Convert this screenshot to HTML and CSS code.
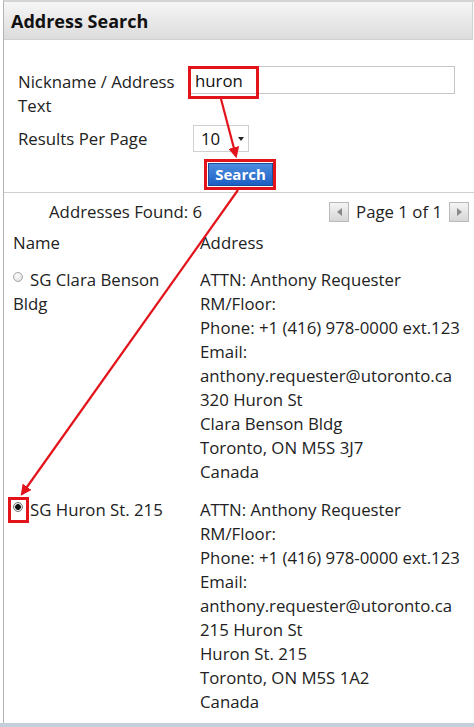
FILE: index.html
```html
<!DOCTYPE html>
<html lang="en">
<head>
<meta charset="utf-8">
<title>Address Search</title>
<link rel="stylesheet" href="styles.css">
</head>
<body>
<div class="window">
  <div class="header">Address Search</div>

  <div class="form">
    <div class="field">
      <label class="label" for="q">Nickname / Address Text</label>
      <input id="q" class="text-input" type="text" value="huron">
    </div>
    <div class="field field-short">
      <label class="label" for="pp">Results Per Page</label>
      <div class="select" id="pp"><span>10</span><span class="caret"></span></div>
    </div>
    <div class="actions">
      <button class="search-btn" type="button">Search</button>
    </div>
  </div>

  <div class="results">
    <div class="summary">
      <span class="found">Addresses Found: 6</span>
      <div class="pager">
        <span class="pg-btn"><span class="tri tri-left"></span></span>
        <span class="pg-text">Page 1 of 1</span>
        <span class="pg-btn"><span class="tri tri-right"></span></span>
      </div>
    </div>

    <div class="grid">
      <div class="col-head">Name</div>
      <div class="col-head">Address</div>

      <div class="name"><span class="radio"></span>SG Clara Benson Bldg</div>
      <div class="addr">ATTN: Anthony Requester<br>RM/Floor:<br>Phone: +1 (416) 978-0000 ext.123<br>Email:<br>anthony.requester@utoronto.ca<br>320 Huron St<br>Clara Benson Bldg<br>Toronto, ON M5S 3J7<br>Canada</div>

      <div class="name"><span class="radio checked"></span>SG Huron St. 215</div>
      <div class="addr">ATTN: Anthony Requester<br>RM/Floor:<br>Phone: +1 (416) 978-0000 ext.123<br>Email:<br>anthony.requester@utoronto.ca<br>215 Huron St<br>Huron St. 215<br>Toronto, ON M5S 1A2<br>Canada</div>
    </div>
  </div>
</div>
<div class="statusbar"></div>

<!-- callout boxes and arrows drawn over the form -->
<svg class="callouts" width="474" height="727" viewBox="0 0 474 727">
  <defs>
    <marker id="head" viewBox="0 0 10 10" refX="8" refY="5" markerWidth="5" markerHeight="5" orient="auto">
      <path d="M0 0 L10 5 L0 10 Z" fill="#e3131b"/>
    </marker>
  </defs>
  <g fill="none" stroke="#e3131b" stroke-width="3">
    <rect x="189.5" y="67.5" width="68" height="30"/>
    <rect x="205.5" y="160.5" width="69" height="28"/>
    <rect x="9.5" y="498.5" width="18" height="23"/>
  </g>
  <g stroke="#e3131b" stroke-width="2.2" fill="none">
    <line x1="221" y1="99" x2="236" y2="156" marker-end="url(#head)"/>
    <line x1="238" y1="190" x2="22" y2="494" marker-end="url(#head)"/>
  </g>
</svg>
</body>
</html>
```
FILE: styles.css
```css
html, body {
  margin: 0;
  padding: 0;
  background: #fff;
}

body {
  font-family: "Open Sans", "Noto Sans", sans-serif;
  font-size: 16.8px;
  line-height: 24px;
  color: #222;
  width: 474px;
  height: 727px;
  overflow: hidden;
  position: relative;
}

.window {
  margin-left: 3px;
  border-top: 2px solid #d4d4d4;
  border-left: 1px solid #b4b4b4;
  height: 721px;
}

.header {
  height: 37px;
  border-bottom: 1px solid #d0d0d0;
  border-right: 1px solid #d0d0d0;
  margin-right: 1px;
  background: linear-gradient(#f6f6f6, #dcdcdc);
  font-weight: 700;
  font-size: 18px;
  line-height: 38px;
  padding-left: 7px;
  color: #111;
}

.form {
  padding: 26px 0 0 14px;
  border-bottom: 1px solid #cfcfcf;
  height: 126px;
}

.field {
  display: flex;
  align-items: flex-start;
}

.label {
  width: 171px;
  flex: none;
  padding-top: 4px;
}

.text-input {
  width: 266px;
  height: 28px;
  box-sizing: border-box;
  margin: 0;
  border: 1px solid #c6c6c6;
  padding: 0 5px;
  font: inherit;
  color: #111;
  background: #fff;
}

.field-short {
  margin-top: 7px;
  align-items: center;
}

.field-short .label {
  width: 175px;
  padding-top: 0;
}

.select {
  width: 56px;
  height: 27px;
  box-sizing: border-box;
  border: 1px solid #d0d0d0;
  display: flex;
  align-items: center;
  justify-content: space-between;
  padding: 0 4px 0 7px;
  color: #111;
}

.caret {
  width: 0;
  height: 0;
  border-left: 3px solid transparent;
  border-right: 3px solid transparent;
  border-top: 4px solid #222;
}

.actions {
  padding: 10px 0 0 190px;
}

.search-btn {
  width: 65px;
  height: 23px;
  border: 1px solid #1b4f9a;
  background: linear-gradient(#4d8de0, #1c5fc4);
  color: #fff;
  font-family: "Open Sans", "Noto Sans", sans-serif;
  font-weight: 700;
  font-size: 15px;
  line-height: 19px;
  padding: 0;
}

.results {
  padding: 0 0 0 9px;
}

.summary {
  display: flex;
  align-items: center;
  justify-content: space-between;
  height: 34px;
  padding-top: 2px;
}

.found {
  padding-left: 36px;
}

.pager {
  display: flex;
  align-items: center;
  gap: 7px;
  margin-right: 5px;
}

.pg-btn {
  width: 18px;
  height: 18px;
  border: 1px solid #b9b9b9;
  background: linear-gradient(#f4f4f4, #d6d6d6);
  display: flex;
  align-items: center;
  justify-content: center;
}

.tri {
  width: 0;
  height: 0;
  border-top: 4px solid transparent;
  border-bottom: 4px solid transparent;
}

.tri-left { border-right: 5px solid #8a8a8a; }
.tri-right { border-left: 5px solid #8a8a8a; }

.grid {
  display: grid;
  grid-template-columns: 187px 1fr;
  row-gap: 14px;
  padding-top: 2px;
}

.col-head {
  height: 23px;
}

.name {
  padding-right: 20px;
}

.radio {
  display: inline-block;
  width: 8px;
  height: 8px;
  border-radius: 50%;
  border: 1px solid #a8a8a8;
  background: radial-gradient(circle at 40% 35%, #fff, #d8d8d8);
  margin-right: 7px;
  vertical-align: 4px;
}

.radio.checked {
  background: radial-gradient(circle, #111 0 2.5px, #e6e6e6 3.2px);
  border-color: #777;
}

.statusbar {
  position: absolute;
  left: 0;
  right: 0;
  bottom: 0;
  height: 4px;
  background: #c5cfdb;
}

.callouts {
  position: absolute;
  left: 0;
  top: 0;
  pointer-events: none;
}
```
